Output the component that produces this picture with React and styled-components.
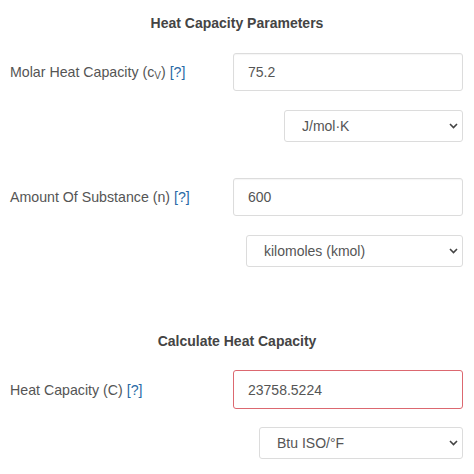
import React from 'react'
import styled, { createGlobalStyle } from 'styled-components'

const GlobalStyle = createGlobalStyle`
  body {
    margin: 0;
    background: #fff;
    font-family: Arial, "Liberation Sans", sans-serif;
  }
`

const StyledPage = styled.div`
  width: 474px;
  box-sizing: border-box;
  padding: 13px 11px 0 10px;
`
const StyledTitle = styled.h3`
  margin: ${(p) => p.top || 0}px 0 0 0;
  height: 20px;
  line-height: 20px;
  text-align: center;
  font-size: 14px;
  font-weight: bold;
  color: #444;
  padding-left: 1px;
`
const StyledRow = styled.div`
  display: grid;
  grid-template-columns: 1fr 230px;
  align-items: center;
  margin-top: ${(p) => p.top || 0}px;
`
const StyledLabel = styled.label`
  font-size: 14.2px;
  color: #555;
  sub {
    font-size: 10px;
    vertical-align: -2px;
  }
`
const StyledHelp = styled.span`
  color: #2a6aa6;
`
const StyledInput = styled.input`
  box-sizing: border-box;
  width: 230px;
  height: ${(p) => (p.error ? 39 : 38)}px;
  padding: 0 14px;
  font-family: Arial, "Liberation Sans", sans-serif;
  font-size: 14px;
  color: #555;
  border: 1px solid ${(p) => (p.error ? '#dc6870' : '#dcdcdc')};
  border-radius: 3px;
  box-shadow: ${(p) => (p.error ? 'none' : 'inset 0 1px 1px rgba(0,0,0,0.04)')};
  outline: none;
  background: #fff;
`
const StyledUnitRow = styled.div`
  display: flex;
  justify-content: flex-end;
  margin-top: ${(p) => p.top || 19}px;
`
const StyledSelectWrap = styled.div`
  position: relative;
  width: ${(p) => p.width}px;
  height: 32px;
`
const StyledSelect = styled.select`
  appearance: none;
  box-sizing: border-box;
  width: 100%;
  height: 32px;
  padding: 0 24px 0 17px;
  font-family: Arial, "Liberation Sans", sans-serif;
  font-size: 14px;
  color: #555;
  border: 1px solid #dcdcdc;
  border-radius: 3px;
  background: #fff;
  outline: none;
`
const StyledChevron = styled.svg`
  position: absolute;
  right: 5px;
  top: 13px;
  pointer-events: none;
`

const UnitSelect = ({ width, label }) => (
  <StyledSelectWrap width={width}>
    <StyledSelect defaultValue={label}>
      <option value={label}>{label}</option>
    </StyledSelect>
    <StyledChevron width="9" height="6" viewBox="0 0 9 6">
      <path d="M1 1 L4.5 4.5 L8 1" fill="none" stroke="#444" strokeWidth="1.6" />
    </StyledChevron>
  </StyledSelectWrap>
)

const App = () => {
  return (
    <StyledPage>
      <GlobalStyle />
      <StyledTitle>Heat Capacity Parameters</StyledTitle>

      <StyledRow top={20}>
        <StyledLabel>
          Molar Heat Capacity (c<sub>V</sub>) <StyledHelp>[?]</StyledHelp>
        </StyledLabel>
        <StyledInput defaultValue="75.2" />
      </StyledRow>
      <StyledUnitRow>
        <UnitSelect width={179} label="J/mol·K" />
      </StyledUnitRow>

      <StyledRow top={36}>
        <StyledLabel>
          Amount Of Substance (n) <StyledHelp>[?]</StyledHelp>
        </StyledLabel>
        <StyledInput defaultValue="600" />
      </StyledRow>
      <StyledUnitRow>
        <UnitSelect width={217} label="kilomoles (kmol)" />
      </StyledUnitRow>

      <StyledTitle top={64}>Calculate Heat Capacity</StyledTitle>

      <StyledRow top={19}>
        <StyledLabel>
          Heat Capacity (C) <StyledHelp>[?]</StyledHelp>
        </StyledLabel>
        <StyledInput error defaultValue="23758.5224" />
      </StyledRow>
      <StyledUnitRow top={18}>
        <UnitSelect width={204} label="Btu ISO/°F" />
      </StyledUnitRow>
    </StyledPage>
  )
}

export default App
